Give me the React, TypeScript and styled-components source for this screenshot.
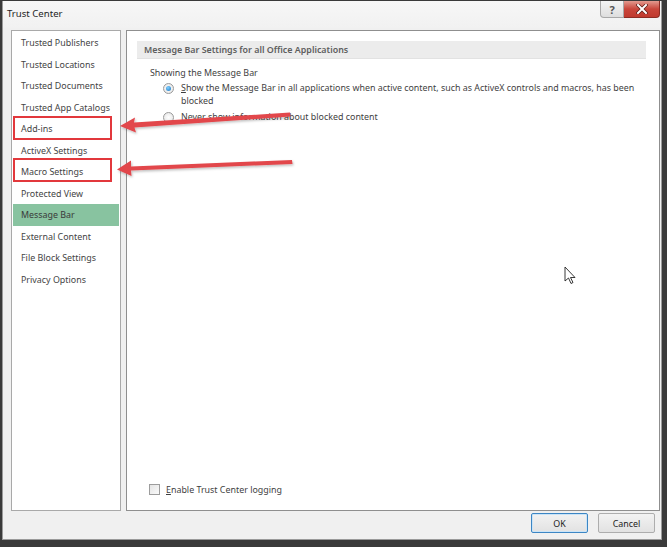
import React from 'react';
import styled, { createGlobalStyle } from 'styled-components';

const GlobalStyle = createGlobalStyle`
  html, body {
    margin: 0;
    padding: 0;
    background: #3a3a3a;
    width: 667px;
    height: 547px;
    overflow: hidden;
  }
  * { box-sizing: border-box; }
`;

const sideItems = [
  'Trusted Publishers',
  'Trusted Locations',
  'Trusted Documents',
  'Trusted App Catalogs',
  'Add-ins',
  'ActiveX Settings',
  'Macro Settings',
  'Protected View',
  'Message Bar',
  'External Content',
  'File Block Settings',
  'Privacy Options',
];

const Page = styled.div`
  position: relative;
  width: 667px;
  height: 547px;
  padding: 1px 5px 0 2px;
  font-family: 'Noto Sans', 'Open Sans', sans-serif;
  font-size: 8.9px;
  color: #3f3f3f;
`;

const Window = styled.div`
  width: 660px;
  height: 539px;
  background: #f0f0f0;
  border: 1px solid #9a9a9a;
  border-top: none;
  display: flex;
  flex-direction: column;
`;

const TitleBar = styled.div`
  height: 27px;
  display: flex;
  align-items: flex-start;
  background: linear-gradient(#f7f7f7, #f1f1f1);
`;

const Title = styled.div`
  padding: 6px 0 0 4px;
  font-size: 9.6px;
  color: #1e1e1e;
  flex: 1;
`;

const HelpButton = styled.div`
  width: 24px;
  height: 17px;
  border: 1px solid #a8a8a8;
  border-top: none;
  border-radius: 0 0 0 4px;
  background: linear-gradient(#f4f4f4, #dedede);
  color: #555;
  font-size: 11px;
  font-weight: bold;
  display: flex;
  align-items: center;
  justify-content: center;
`;

const CloseButton = styled.div`
  width: 36px;
  height: 17px;
  margin-right: 1px;
  border: 1px solid #8d2c24;
  border-top: none;
  border-left: none;
  border-radius: 0 0 4px 0;
  background: linear-gradient(#e39a8f, #c9463b 50%, #c03a2f);
  display: flex;
  align-items: center;
  justify-content: center;
`;

const Body = styled.div`
  flex: 1;
  display: flex;
  gap: 5px;
  padding: 2px 1px 0 8px;
  min-height: 0;
`;

const Sidebar = styled.div`
  width: 110px;
  background: #fff;
  border: 1px solid #a9a9a9;
  padding: 1px 1px 0 1px;
  display: flex;
  flex-direction: column;
`;

const SideItem = styled.div<{ $active?: boolean }>`
  height: 21.5px;
  line-height: 21.5px;
  padding-left: 8px;
  white-space: nowrap;
  color: ${(p) => (p.$active ? '#3a3a3a' : '#444')};
  background: ${(p) => (p.$active ? '#88c3a0' : 'transparent')};
`;

const Main = styled.div`
  flex: 1;
  background: #fff;
  border: 1px solid #8f8f8f;
  display: flex;
  flex-direction: column;
  padding: 10px 13px 14px 10px;
`;

const SectionHeader = styled.div`
  height: 18px;
  background: #ececec;
  border-bottom: 1px solid #e2e2e2;
  padding-left: 7px;
  line-height: 18px;
  font-weight: 600;
  color: #5e5e5e;
`;

const GroupLabel = styled.div`
  margin: 7px 0 0 13px;
  line-height: 13px;
`;

const OptionRow = styled.div`
  display: flex;
  align-items: flex-start;
  gap: 7px;
  margin: 3px 0 0 26px;
  line-height: 12.5px;
  & + & {
    margin-top: 4px;
  }
`;

const Radio = styled.span<{ $checked?: boolean }>`
  flex: none;
  width: 11px;
  height: 11px;
  margin-top: 1px;
  border-radius: 50%;
  border: 1px solid #9a9a9a;
  background: radial-gradient(#ffffff, #e2e2e2);
  display: flex;
  align-items: center;
  justify-content: center;
  &::after {
    content: '';
    display: ${(p) => (p.$checked ? 'block' : 'none')};
    width: 5px;
    height: 5px;
    border-radius: 50%;
    background: radial-gradient(circle at 40% 35%, #7fd0ff, #1a73c0);
  }
`;

/* access-key label: first letter underlined */
const Label = styled.span`
  display: block;
  &::first-letter {
    text-decoration: underline;
  }
`;

const Spacer = styled.div`
  flex: 1;
`;

const CheckRow = styled.div`
  display: flex;
  align-items: center;
  gap: 6px;
  margin-left: 12px;
`;

const CheckBox = styled.span`
  width: 11px;
  height: 11px;
  border: 1px solid #9c9c9c;
  background: linear-gradient(135deg, #e4e4e4, #fafafa);
`;

const Footer = styled.div`
  height: 28px;
  display: flex;
  justify-content: flex-end;
  align-items: flex-start;
  gap: 10px;
  padding: 2px 6px 0 0;
`;

const Button = styled.div<{ $default?: boolean }>`
  width: 57px;
  height: 20px;
  border: 1px solid ${(p) => (p.$default ? '#3c86c4' : '#adadad')};
  border-radius: 2px;
  background: linear-gradient(#f2f2f2, #e2e2e2);
  box-shadow: ${(p) => (p.$default ? 'inset 0 0 0 1px #cbe4f7' : 'none')};
  display: flex;
  align-items: center;
  justify-content: center;
  color: #222;
`;

const Highlight = styled.div<{ $top: number }>`
  position: absolute;
  left: 13px;
  top: ${(p) => p.$top}px;
  width: 99px;
  height: 24px;
  border: 2.5px solid #e2383c;
`;

const Overlay = styled.svg`
  position: absolute;
  left: 0;
  top: 0;
  pointer-events: none;
`;

export default function App() {
  return (
    <>
      <GlobalStyle />
      <Page>
        <Window>
          <TitleBar>
            <Title>Trust Center</Title>
            <HelpButton>?</HelpButton>
            <CloseButton>
              <svg width="12" height="10" viewBox="0 0 12 10">
                <path d="M2 1 L10 9 M10 1 L2 9" stroke="#5a1a14" strokeWidth="3.4" strokeLinecap="square" />
                <path d="M2 1 L10 9 M10 1 L2 9" stroke="#fff" strokeWidth="2" strokeLinecap="square" />
              </svg>
            </CloseButton>
          </TitleBar>
          <Body>
            <Sidebar>
              {sideItems.map((s) => (
                <SideItem key={s} $active={s === 'Message Bar'}>
                  {s}
                </SideItem>
              ))}
            </Sidebar>
            <Main>
              <SectionHeader>Message Bar Settings for all Office Applications</SectionHeader>
              <GroupLabel>Showing the Message Bar</GroupLabel>
              <OptionRow>
                <Radio $checked />
                <Label>
                  Show the Message Bar in all applications when active content, such as ActiveX controls and macros,
                  has been blocked
                </Label>
              </OptionRow>
              <OptionRow>
                <Radio />
                <Label>Never show information about blocked content</Label>
              </OptionRow>
              <Spacer />
              <CheckRow>
                <CheckBox />
                <Label>Enable Trust Center logging</Label>
              </CheckRow>
            </Main>
          </Body>
          <Footer>
            <Button $default>OK</Button>
            <Button>Cancel</Button>
          </Footer>
        </Window>

        <Highlight $top={116} />
        <Highlight $top={158} />

        <Overlay width="667" height="547" viewBox="0 0 667 547">
          <defs>
            <filter id="sh" x="-10%" y="-50%" width="120%" height="200%">
              <feDropShadow dx="1" dy="1.5" stdDeviation="1" floodColor="#000" floodOpacity="0.25" />
            </filter>
          </defs>
          <g fill="#e2474b" filter="url(#sh)">
            <path d="M290 112.5 L134 122.5 L135 117.5 L120 126 L136 132.5 L134.5 127.5 L290.5 116.5 Z" />
            <path d="M292 160 L131 166.5 L131 160.5 L117 169.5 L131.5 176 L131 170.5 L292.5 164 Z" />
          </g>
          <path
            d="M565 267 L565 281 L568.5 278 L571 283.5 L573 282.5 L570.5 277.5 L575 277.5 Z"
            fill="#fff"
            stroke="#222"
            strokeWidth="0.9"
            strokeLinejoin="round"
          />
        </Overlay>
      </Page>
    </>
  );
}
